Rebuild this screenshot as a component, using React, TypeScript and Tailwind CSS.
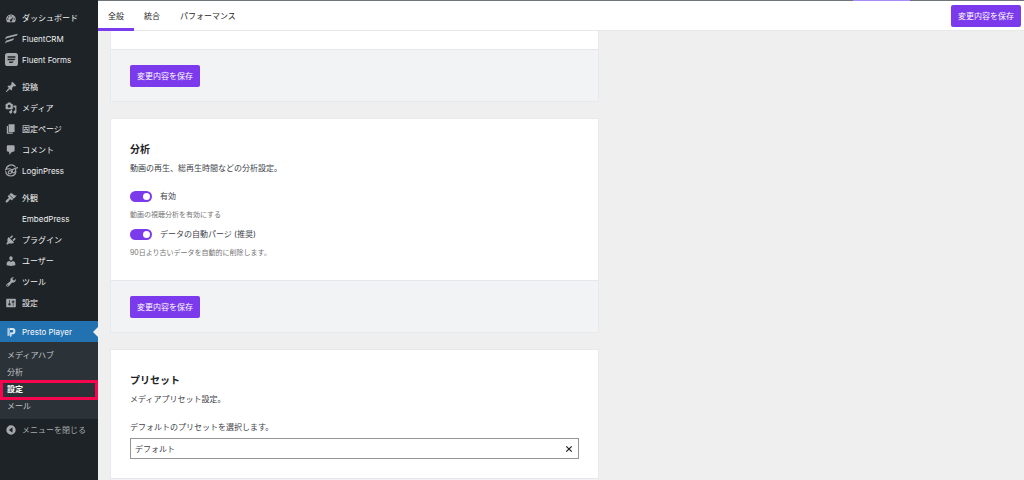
import { useState } from "react";
import type { ReactNode } from "react";

const dash = (d: string) => <path d={d} fill="currentColor" fillRule="evenodd" />;

type Item = { label: string; icon: ReactNode; large?: boolean };

const groups: Item[][] = [
  [
    {
      label: "ダッシュボード",
      icon: (
        <>
          {dash(
            "M3.76 17h12.48A7.95 7.95 0 0 0 18 12.09c0-4.4-3.58-8-8-8s-8 3.59-8 8c0 1.86.66 3.57 1.76 4.91zM10 5.5a1.1 1.1 0 1 1 0 2.2 1.1 1.1 0 0 1 0-2.2zM6 7a1.1 1.1 0 1 1 0 2.2A1.1 1.1 0 0 1 6 7zM4.6 10.6a1.1 1.1 0 1 1 0 2.2 1.1 1.1 0 0 1 0-2.2zM15.4 10.6a1.1 1.1 0 1 1 0 2.2 1.1 1.1 0 0 1 0-2.2zM14.6 7.2l-2.7 6.1a2 2 0 1 1-1.8-1.2z",
          )}
        </>
      ),
    },
    {
      label: "FluentCRM",
      large: true,
      icon: dash(
        "M.5 9.500C1 7.800 2 7 3.800 6.400L19.500 2.500C19 4.800 18 5.700 16 6.200L4 9.300C2.200 9.800 1.200 10.500.5 12zM.5 15.500c.5-1.700 1.500-2.500 3.300-3L14 9.800c-.5 2.200-1.500 3.100-3.500 3.600L4 15.200c-1.800.5-2.800 1.300-3.500 2.800z",
      ),
    },
    {
      label: "Fluent Forms",
      large: true,
      icon: dash(
        "M4 0h12a4 4 0 0 1 4 4v12a4 4 0 0 1-4 4H4a4 4 0 0 1-4-4V4a4 4 0 0 1 4-4zM4 5v2.200h12V5zM4 9v2.200h9.500c1.500 0 2.500-.8 2.500-2.200zM6.500 13v2.200h4c1.500 0 2.500-.8 2.500-2.200z",
      ),
    },
  ],
  [
    {
      label: "投稿",
      icon: dash(
        "M10.44 3.02l1.82-1.82 6.36 6.35-1.83 1.82c-1.05-.68-2.48-.57-3.41.36l-.75.75c-.92.93-1.04 2.35-.35 3.41l-1.83 1.82-2.41-2.41-2.8 2.79c-.42.42-3.38 2.71-3.8 2.29s1.86-3.39 2.28-3.81l2.79-2.79L4.1 9.36l1.83-1.82c1.05.69 2.48.57 3.4-.36l.75-.75c.93-.92 1.05-2.35.36-3.41z",
      ),
    },
    {
      label: "メディア",
      icon: dash(
        "M13 11V4c0-.55-.45-1-1-1h-1.67L9 1H5L3.67 3H2c-.55 0-1 .45-1 1v7c0 .55.45 1 1 1h10c.55 0 1-.45 1-1zM7 4.5c1.38 0 2.5 1.12 2.5 2.5S8.38 9.5 7 9.5 4.5 8.38 4.5 7 5.62 4.5 7 4.5zM14 6h5v10.5c0 1.38-1.12 2.5-2.5 2.5S14 17.88 14 16.5s1.12-2.5 2.5-2.5c.17 0 .34.02.5.05V9h-3V6zm-4 8.05V13h2v3.5c0 1.38-1.12 2.5-2.5 2.5S7 17.88 7 16.5 8.12 14 9.5 14c.17 0 .34.02.5.05z",
      ),
    },
    { label: "固定ページ", icon: dash("M6 15V2h10v13H6zm-1 1h8v2H3V5h2v11z") },
    {
      label: "コメント",
      icon: dash(
        "M5 2h9c1.1 0 2 .9 2 2v7c0 1.1-.9 2-2 2h-2l-5 5v-5H5c-1.1 0-2-.9-2-2V4c0-1.1.9-2 2-2z",
      ),
    },
    {
      label: "LoginPress",
      large: true,
      icon: (
        <g fill="none" stroke="currentColor" strokeWidth="1.700">
          <path d="M16 4.500A8.200 8.200 0 0 0 1.500 8.500M1 11c.5 4.500 3.800 7.500 8 7.500 4.500 0 7.500-3 8-7.500" />
          <path d="M0 9.500c4-3 8-2.500 11-.3 2.500-2.200 5-3.400 9-3.700M5 13.500c0-2.600 2-3.800 3.800-3.200 2 .8 1.500 4.200-.8 4.700-1.600.3-3-.3-3-1.500zM11 9.500c0 3 1 4.500 3 4s2.500-3 2.500-6" />
        </g>
      ),
    },
  ],
  [
    {
      label: "外観",
      icon: dash(
        "M14.48 11.06L7.41 3.99l1.5-1.5c.5-.56 2.3-.47 3.51.32 1.21.8 1.43 1.28 2.91 2.1 1.18.64 2.45 1.26 4.45.85zm-.71.71L6.7 4.7 4.93 6.47c-.39.39-.39 1.02 0 1.41l1.06 1.06c.39.39.39 1.03 0 1.42-.6.6-1.43 1.11-2.21 1.69-.35.26-.7.53-1.01.84C1.43 14.23.4 16.08 1.4 17.07c.99 1 2.84-.03 4.18-1.36.31-.31.58-.66.85-1.02.57-.78 1.08-1.61 1.69-2.21.39-.39 1.02-.39 1.41 0l1.06 1.06c.39.39 1.02.39 1.41 0z",
      ),
    },
    { label: "EmbedPress", icon: null },
    {
      label: "プラグイン",
      icon: dash(
        "M13.11 4.36L9.87 7.6 8 5.73l3.24-3.24c.35-.34 1.05-.2 1.56.32.52.51.66 1.21.31 1.55zm-8 1.77l.91-1.12 9.01 9.01-1.19.84c-.71.71-2.63 1.16-3.82 1.16H6.14L4.9 17.26c-.59.59-1.54.59-2.12 0-.59-.58-.59-1.53 0-2.12l1.24-1.24v-3.88c0-1.13.4-3.19 1.09-3.89zm7.26 3.97l3.24-3.24c.34-.35 1.04-.21 1.55.31.52.51.66 1.21.31 1.55l-3.24 3.25z",
      ),
    },
    {
      label: "ユーザー",
      icon: dash(
        "M10 9.25c-2.27 0-2.73-3.44-2.73-3.44C7 4.02 7.82 2 9.97 2c2.16 0 2.98 2.02 2.71 3.81 0 0-.41 3.44-2.68 3.44zm0 2.57L12.72 10c2.39 0 4.52 2.33 4.52 4.53v2.49s-3.65 1.13-7.24 1.13c-3.65 0-7.24-1.13-7.24-1.13v-2.49c0-2.25 1.94-4.48 4.47-4.48z",
      ),
    },
    {
      label: "ツール",
      icon: dash(
        "M16.68 9.77c-1.34 1.34-3.3 1.67-4.95.99l-5.41 6.52c-.99.99-2.59.99-3.58 0s-.99-2.59 0-3.57l6.52-5.42c-.68-1.65-.35-3.61.99-4.95 1.28-1.28 3.12-1.62 4.72-1.06l-2.89 2.89 2.82 2.82 2.86-2.87c.53 1.58.18 3.39-1.08 4.65zM3.81 16.21c.4.39 1.04.39 1.43 0 .4-.4.4-1.04 0-1.43-.39-.4-1.03-.4-1.43 0-.39.39-.39 1.03 0 1.43z",
      ),
    },
    {
      label: "設定",
      icon: dash(
        "M18 16V4c0-.55-.45-1-1-1H3c-.55 0-1 .45-1 1v12c0 .55.45 1 1 1h14c.55 0 1-.45 1-1zM8 11h1c.55 0 1 .45 1 1s-.45 1-1 1H8v1.5c0 .28-.22.5-.5.5s-.5-.22-.5-.5V13H6c-.55 0-1-.45-1-1s.45-1 1-1h1V5.5c0-.28.22-.5.5-.5s.5.22.5.5V11zm5-2h-1c-.55 0-1-.45-1-1s.45-1 1-1h1V5.5c0-.28.22-.5.5-.5s.5.22.5.5V7h1c.55 0 1 .45 1 1s-.45 1-1 1h-1v5.5c0 .28-.22.5-.5.5s-.5-.22-.5-.5V9z",
      ),
    },
  ],
];

function PrestoIcon() {
  return (
    <svg viewBox="0 0 20 20" aria-hidden="true" className="size-3" fill="#dbe9f5">
      <path d="M4 4.500C4 3.200 5.200 2.700 6.200 3.300L8 4.400v11L6.200 16.500C5.200 17.100 4 16.600 4 15.300z" opacity=".75" />
      <path d="M8 3.500h4.200a5.200 5.200 0 0 1 0 10.400H11v3l-2.500 1.400V10.800h3.400a2 2 0 0 0 0-4H8z" />
    </svg>
  );
}

function Glyph({ icon, large }: { icon: ReactNode; large?: boolean }) {
  return (
    <span className="flex w-[22px] shrink-0 justify-center text-[#a7aaad]">
      {icon && (
        <svg viewBox="0 0 20 20" aria-hidden="true" className={large ? "size-[13px]" : "size-3"}>
          {icon}
        </svg>
      )}
    </span>
  );
}

function Sidebar() {
  const sub = ["メディアハブ", "分析", "設定", "メール"];
  return (
    <nav className="flex w-[98px] shrink-0 flex-col bg-[#1d2327] pt-[7px] text-[#f0f0f1]">
      <div className="flex flex-col gap-1.5">
        {groups.map((group, i) => (
          <ul key={i}>
            {group.map((item) => (
              <li key={item.label}>
                <a href="#" className="flex h-[21px] items-center">
                  <Glyph icon={item.icon} large={item.large} />
                  {item.label}
                </a>
              </li>
            ))}
          </ul>
        ))}
      </div>
      <a href="#" className="relative mt-2 flex h-[21px] items-center bg-[#2271b1] text-white">
        <span className="flex w-[22px] justify-center">
          <PrestoIcon />
        </span>
        Presto Player
        <svg viewBox="0 0 5 10" aria-hidden="true" className="absolute right-0 h-2.5 w-[5px]">
          <path d="M5 0v10L0 5z" fill="#efefef" />
        </svg>
      </a>
      <ul className="bg-[#2c3338] pt-1 pb-[5px] text-[#c3c4c7]">
        {sub.map((label) => (
          <li key={label} className="relative">
            <a
              href="#"
              className={
                label === "設定"
                  ? "flex h-[17px] items-center px-[7px] font-bold text-white"
                  : "flex h-[17px] items-center px-[7px]"
              }
            >
              {label}
            </a>
            {label === "設定" && (
              <span className="pointer-events-none absolute inset-x-0 top-0 -bottom-[3px] border-[3px] border-[#f5064f]" />
            )}
          </li>
        ))}
      </ul>
      <button type="button" className="flex h-[21px] items-center text-[#a7aaad]">
        <Glyph
          icon={dash("M10 2.200a7.800 7.800 0 1 1 0 15.600 7.800 7.800 0 0 1 0-15.600zM12.500 5.500L6.500 10l6 4.500z")}
        />
        メニューを閉じる
      </button>
    </nav>
  );
}

function SaveButton() {
  return (
    <button
      type="button"
      className="h-[22px] rounded-[2px] bg-[#7c3aed] px-[7px] whitespace-nowrap text-white"
    >
      変更内容を保存
    </button>
  );
}

function CardFooter({ children }: { children?: ReactNode }) {
  return (
    <div className="border-t border-[#e5e7eb] bg-[#f2f3f5] px-[19px] pt-[15px] pb-[14px]">
      {children}
    </div>
  );
}

function CardHeading({ title, text }: { title: string; text: string }) {
  return (
    <>
      <h2 className="text-[10px] leading-4 font-bold text-[#1d2327]">{title}</h2>
      <p className="mt-1 leading-[14px]">{text}</p>
    </>
  );
}

function Toggle({ id, label, help }: { id: string; label: string; help: string }) {
  const [on, setOn] = useState(true);
  return (
    <div>
      <div className="flex h-[14px] items-center gap-2">
        <input
          id={id}
          type="checkbox"
          role="switch"
          checked={on}
          onChange={() => setOn(!on)}
          className="h-[11px] w-[22px] appearance-none rounded-full bg-[#9ca3af] before:m-0.5 before:block before:size-[7px] before:rounded-full before:bg-white checked:bg-[#7c3aed] checked:before:ml-[13px]"
        />
        <label htmlFor={id}>{label}</label>
      </div>
      <p className="mt-1.5 text-[7px] leading-3 text-[#757575]">{help}</p>
    </div>
  );
}

export default function App() {
  const [preset, setPreset] = useState("デフォルト");
  const tabs = ["全般", "統合", "パフォーマンス"];
  return (
    <div
      lang="ja"
      className="flex h-screen overflow-hidden bg-[#efefef] font-['Inter','Noto_Sans_CJK_JP',sans-serif] text-[8px] text-[#3c434a]"
    >
      <Sidebar />
      <div className="flex min-w-0 flex-1 flex-col">
        <div className="flex h-px shrink-0 justify-end bg-[#70757a]">
          <span className="mr-[114px] w-[57px] bg-[#a78bfa]" />
        </div>
        <header className="flex h-[30px] shrink-0 items-center justify-between border-b border-[#e8e8e8] bg-white pr-[3px]">
          <div role="tablist" className="flex h-[30px] self-start">
            {tabs.map((tab, i) => (
              <button
                key={tab}
                type="button"
                role="tab"
                aria-selected={i === 0}
                className={
                  i === 0
                    ? "border-y-[3px] border-t-transparent border-b-[#7c3aed] px-2.5 text-[#1e1e1e]"
                    : "border-y-[3px] border-transparent px-2.5 text-[#1e1e1e]"
                }
              >
                {tab}
              </button>
            ))}
          </div>
          <SaveButton />
        </header>
        <main className="min-h-0 flex-1 overflow-hidden px-3">
          <div className="flex max-w-[489px] flex-col gap-4">
            <section className="border border-t-0 border-[#e8e9eb] bg-white pt-[18px]">
              <CardFooter>
                <SaveButton />
              </CardFooter>
            </section>
            <section className="border border-[#e8e9eb] bg-white">
              <div className="px-[19px] pt-[22px] pb-[21px]">
                <CardHeading title="分析" text="動画の再生、総再生時間などの分析設定。" />
                <div className="mt-[14px] flex flex-col gap-1.5">
                  <Toggle id="enable" label="有効" help="動画の視聴分析を有効にする" />
                  <Toggle
                    id="purge"
                    label="データの自動パージ (推奨)"
                    help="90日より古いデータを自動的に削除します。"
                  />
                </div>
              </div>
              <CardFooter>
                <SaveButton />
              </CardFooter>
            </section>
            <section className="border border-[#e8e9eb] bg-white">
              <div className="px-[19px] pt-[22px] pb-[19px]">
                <CardHeading title="プリセット" text="メディアプリセット設定。" />
                <label htmlFor="preset" className="mt-[14px] block leading-[14px]">
                  デフォルトのプリセットを選択します。
                </label>
                <div className="mt-1 flex h-[21px] items-center border border-[#949494] pr-[5px]">
                  <input
                    id="preset"
                    type="text"
                    value={preset}
                    onChange={(e) => setPreset(e.target.value)}
                    className="min-w-0 flex-1 px-1 outline-none"
                  />
                  <button type="button" aria-label="クリア" onClick={() => setPreset("")}>
                    <svg viewBox="0 0 8 8" className="size-2" aria-hidden="true">
                      <path d="M1.300 1.300l5.400 5.400M6.700 1.300L1.300 6.700" stroke="#1e1e1e" strokeWidth="1.200" />
                    </svg>
                  </button>
                </div>
              </div>
              <CardFooter />
            </section>
          </div>
        </main>
      </div>
    </div>
  );
}
